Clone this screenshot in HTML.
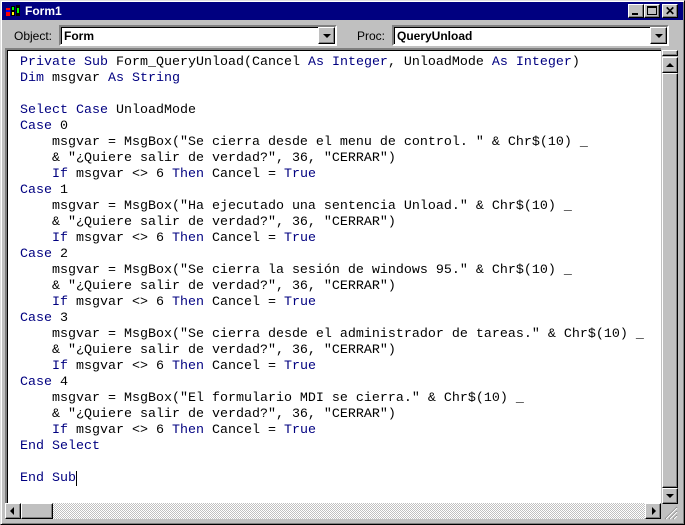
<!DOCTYPE html>
<html><head><style>
body{margin:0;width:685px;height:525px;background:#c0c0c0;position:relative;overflow:hidden;font-family:"Liberation Sans",Arial,sans-serif}
.a{position:absolute}
.win{left:0;top:0;width:683px;height:523px;border:1px solid;border-color:#dfdfdf #000 #000 #dfdfdf;box-shadow:inset 1px 1px #fff,inset -1px -1px #808080}
.title{left:2px;top:2px;width:681px;height:18px;background:#000080;color:#fff;font-weight:bold;font-size:12px}
.btn{background:#c0c0c0;border:1px solid;border-color:#fff #000 #000 #fff;box-shadow:inset -1px -1px #808080;box-sizing:border-box}
.combo{background:#fff;border:2px solid;border-color:#808080 #fff #fff #808080;box-shadow:inset 1px 1px #000;box-sizing:border-box;font-weight:bold;font-size:12px;padding:2px 0 0 3px}
.lbl{font-size:12px;color:#000}
.code{left:5px;top:48px;width:656px;height:455px;background:#fff;border-top:2px solid #808080;border-left:2px solid #808080;box-sizing:border-box;box-shadow:inset 1px 1px #000}
pre{margin:0;position:absolute;left:13px;top:5px;font-family:"Liberation Mono","Courier New",monospace;font-size:13.33px;line-height:16px;color:#000}
b{font-weight:normal;color:#000080}
.dith{background-color:#c0c0c0;background-image:repeating-conic-gradient(#fff 0 25%,#c0c0c0 0 50%);background-size:2px 2px}
.tri{width:0;height:0;border-style:solid}
</style></head><body>
<div class="a win"></div>
<div class="a title">
 <svg class="a" style="left:3px;top:2px" width="16" height="14"><rect x="1" y="4" width="4" height="8" fill="#f00"/><rect x="1" y="6" width="4" height="2" fill="#00f"/><rect x="6" y="2" width="4" height="10" fill="#000"/><rect x="7" y="3" width="2" height="3" fill="#0f0"/><rect x="7" y="8" width="2" height="3" fill="#ff0"/><rect x="11" y="1" width="4" height="11" fill="#000"/><rect x="12" y="4" width="2" height="5" fill="#0f0"/></svg>
 <span class="a" style="left:23px;top:2px">Form1</span>
 <div class="a btn" style="left:626px;top:2px;width:16px;height:14px"><div class="a" style="left:3px;top:8px;width:6px;height:2px;background:#000"></div></div>
 <div class="a btn" style="left:642px;top:2px;width:16px;height:14px"><div class="a" style="left:2px;top:1px;width:10px;height:9px;border:1px solid #000;border-top-width:2px;box-sizing:border-box"></div></div>
 <div class="a btn" style="left:660px;top:2px;width:16px;height:14px;color:#000;font-size:12px;line-height:12px;text-align:center">✕</div>
</div>
<span class="a lbl" style="left:14px;top:29px">Object:</span>
<div class="a combo" style="left:59px;top:25px;width:278px;height:21px">Form</div>
<div class="a btn" style="left:318px;top:27px;width:17px;height:17px"><div class="a tri" style="left:4px;top:6px;border-width:4px 4px 0 4px;border-color:#000 transparent transparent"></div></div>
<span class="a lbl" style="left:357px;top:29px">Proc:</span>
<div class="a combo" style="left:392px;top:25px;width:277px;height:21px">QueryUnload</div>
<div class="a btn" style="left:650px;top:27px;width:17px;height:17px"><div class="a tri" style="left:4px;top:6px;border-width:4px 4px 0 4px;border-color:#000 transparent transparent"></div></div>
<div class="a code"><pre><b>Private Sub</b> Form_QueryUnload(Cancel <b>As Integer</b>, UnloadMode <b>As Integer</b>)
<b>Dim</b> msgvar <b>As String</b>

<b>Select Case</b> UnloadMode
<b>Case</b> 0
    msgvar = MsgBox("Se cierra desde el menu de control. " &amp; Chr$(10) _
    &amp; "¿Quiere salir de verdad?", 36, "CERRAR")
    <b>If</b> msgvar &lt;&gt; 6 <b>Then</b> Cancel = <b>True</b>
<b>Case</b> 1
    msgvar = MsgBox("Ha ejecutado una sentencia Unload." &amp; Chr$(10) _
    &amp; "¿Quiere salir de verdad?", 36, "CERRAR")
    <b>If</b> msgvar &lt;&gt; 6 <b>Then</b> Cancel = <b>True</b>
<b>Case</b> 2
    msgvar = MsgBox("Se cierra la sesión de windows 95." &amp; Chr$(10) _
    &amp; "¿Quiere salir de verdad?", 36, "CERRAR")
    <b>If</b> msgvar &lt;&gt; 6 <b>Then</b> Cancel = <b>True</b>
<b>Case</b> 3
    msgvar = MsgBox("Se cierra desde el administrador de tareas." &amp; Chr$(10) _
    &amp; "¿Quiere salir de verdad?", 36, "CERRAR")
    <b>If</b> msgvar &lt;&gt; 6 <b>Then</b> Cancel = <b>True</b>
<b>Case</b> 4
    msgvar = MsgBox("El formulario MDI se cierra." &amp; Chr$(10) _
    &amp; "¿Quiere salir de verdad?", 36, "CERRAR")
    <b>If</b> msgvar &lt;&gt; 6 <b>Then</b> Cancel = <b>True</b>
<b>End Select</b>

<b>End Sub</b><span style="border-left:1px solid #000"></span></pre></div>
<div class="a" style="left:661px;top:48px;width:17px;height:456px;background:#c0c0c0"></div>
<div class="a btn" style="left:662px;top:50px;width:16px;height:6px"></div>
<div class="a btn" style="left:662px;top:57px;width:16px;height:16px"><div class="a tri" style="left:3px;top:5px;border-width:0 4px 4px 4px;border-color:transparent transparent #000"></div></div>
<div class="a btn" style="left:662px;top:73px;width:16px;height:415px"></div>
<div class="a btn" style="left:662px;top:488px;width:16px;height:16px"><div class="a tri" style="left:3px;top:5px;border-width:4px 4px 0 4px;border-color:#000 transparent transparent"></div></div>
<div class="a dith" style="left:5px;top:503px;width:656px;height:16px"></div>
<div class="a btn" style="left:5px;top:503px;width:16px;height:16px"><div class="a tri" style="left:4px;top:3px;border-width:4px 4px 4px 0;border-color:transparent #000 transparent transparent"></div></div>
<div class="a btn" style="left:21px;top:503px;width:32px;height:16px"></div>
<div class="a btn" style="left:645px;top:503px;width:16px;height:16px"><div class="a tri" style="left:6px;top:3px;border-width:4px 0 4px 4px;border-color:transparent transparent transparent #000"></div></div>
<svg class="a" style="left:662px;top:504px" width="16" height="16"><path d="M15 3L3 15M15 7L7 15M15 11L11 15" stroke="#808080" stroke-width="1"/><path d="M15 4L4 15M15 8L8 15M15 12L12 15" stroke="#fff" stroke-width="1"/></svg>
</body></html>
